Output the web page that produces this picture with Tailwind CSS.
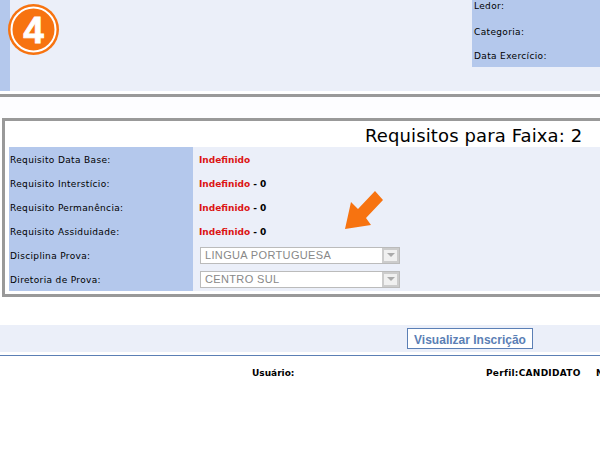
<!DOCTYPE html>
<html>
<head>
<meta charset="utf-8">
<script src="https://cdn.jsdelivr.net/npm/@tailwindcss/browser@4"></script>
</head>
<body class="bg-white w-[600px] h-[449px] overflow-hidden font-['DejaVu_Sans',sans-serif] text-[9px] text-black">
<section class="relative flex h-[91px] bg-[#ebeff9]">
  <div class="w-[10px] bg-[#b4c8ec]"></div>
  <svg class="absolute left-[8px] top-[4px]" width="52" height="52" viewBox="0 0 52 52">
    <circle cx="25.5" cy="25.5" r="25.5" fill="#f77310"/>
    <circle cx="25.5" cy="25.5" r="22" fill="none" stroke="#fff" stroke-width="2"/>
    <text x="25.5" y="39" text-anchor="middle" font-family="Liberation Sans" font-weight="700" font-size="37" fill="#fff" stroke="#fff" stroke-width="0.8">4</text>
  </svg>
  <div class="ml-auto w-[128px] h-[67px] bg-[#b4c8ec] pl-[2px] flex flex-col tracking-[0.35px]">
    <div class="h-[13px] leading-[13px]">Ledor:</div>
    <div class="h-[25px] leading-[38px]">Categoria:</div>
    <div class="h-[25px] leading-[37px]">Data Exercício:</div>
  </div>
</section>
<div class="h-[3px]"></div>
<div class="h-[3px] bg-[#999]"></div>
<div class="h-[21px] bg-[#fdfdff]"></div>
<section class="ml-[2px] w-[620px] h-[179px] border-[3px] border-[#999] pl-[4px] bg-white">
  <div class="h-[26px] pl-[356px] text-[18px] leading-[30px] whitespace-nowrap tracking-[0.12px]">Requisitos para Faixa: 2</div>
  <div class="grid grid-cols-[184px_1fr] grid-rows-[repeat(6,24px)] bg-[#ebeff9] tracking-[0.35px] items-center">
    <div class="bg-[#b4c8ec] h-full pl-[1px] leading-[26px]">Requisito Data Base:</div>
    <div class="pl-[6px] pt-[4px] font-bold tracking-normal"><span class="text-[#dc1414]">Indefinido</span></div>
    <div class="bg-[#b4c8ec] h-full pl-[1px] leading-[26px]">Requisito Interstício:</div>
    <div class="pl-[6px] pt-[4px] font-bold tracking-normal"><span class="text-[#dc1414]">Indefinido</span> - 0</div>
    <div class="bg-[#b4c8ec] h-full pl-[1px] leading-[26px]">Requisito Permanência:</div>
    <div class="pl-[6px] pt-[4px] font-bold tracking-normal"><span class="text-[#dc1414]">Indefinido</span> - 0</div>
    <div class="bg-[#b4c8ec] h-full pl-[1px] leading-[26px]">Requisito Assiduidade:</div>
    <div class="pl-[6px] pt-[4px] font-bold tracking-normal"><span class="text-[#dc1414]">Indefinido</span> - 0</div>
    <div class="bg-[#b4c8ec] h-full pl-[1px] leading-[26px]">Disciplina Prova:</div>
    <div class="pl-[7px]">
      <div class="w-[200px] h-[17px] border border-[#bbb] bg-white flex items-center justify-between pl-[4px] text-[11px] text-[#888] font-['Liberation_Sans',sans-serif] tracking-[0.35px]">
        <span>LINGUA PORTUGUESA</span>
        <span class="w-[17px] h-[15px] border-2 border-[#ccc] bg-[#f0f0f0] flex items-center justify-center"><span class="w-0 h-0 border-x-[4px] border-x-transparent border-t-[4px] border-t-[#aaa]"></span></span>
      </div>
    </div>
    <div class="bg-[#b4c8ec] h-full pl-[1px] leading-[26px]">Diretoria de Prova:</div>
    <div class="pl-[7px]">
      <div class="w-[200px] h-[17px] border border-[#bbb] bg-white flex items-center justify-between pl-[4px] text-[11px] text-[#888] font-['Liberation_Sans',sans-serif] tracking-[0.35px]">
        <span>CENTRO SUL</span>
        <span class="w-[17px] h-[15px] border-2 border-[#ccc] bg-[#f0f0f0] flex items-center justify-center"><span class="w-0 h-0 border-x-[4px] border-x-transparent border-t-[4px] border-t-[#aaa]"></span></span>
      </div>
    </div>
  </div>
</section>
<svg class="absolute left-[344px] top-[190px]" width="42" height="42" viewBox="0 0 42 42">
  <polygon points="31,1 39,10 22,28 27,35 1,39 7,12 14,19" fill="#f77310"/>
</svg>
<div class="h-[28px] bg-white"></div>
<section class="h-[27px] bg-[#ebeff9] flex items-start pt-[3px] pl-[407px]">
  <button class="w-[126px] h-[21px] border border-[#5b7fb5] bg-white text-[#5b7fb5] text-[12px] font-bold font-['Liberation_Sans',sans-serif] leading-[21px] pt-[1px]">Visualizar Inscrição</button>
</section>
<div class="h-[3px]"></div>
<div class="h-px bg-[#5b7fb5]"></div>
<footer class="relative h-[30px] font-bold whitespace-nowrap">
  <span class="absolute left-[252px] top-[11px]">Usuário:</span>
  <span class="absolute left-[486px] top-[11px] tracking-[0.27px]">Perfil:CANDIDATO</span>
  <span class="absolute left-[596px] top-[11px]">N</span>
</footer>
</body>
</html>
